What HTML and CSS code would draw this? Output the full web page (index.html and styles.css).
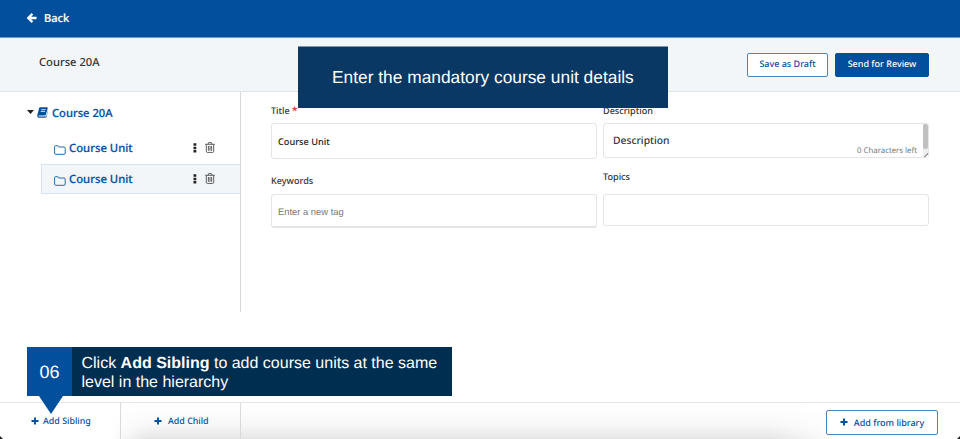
FILE: index.html
```html
<!DOCTYPE html>
<html lang="en">
<head>
<meta charset="utf-8">
<title>Course 20A</title>
<link rel="stylesheet" href="styles.css">
</head>
<body>
<svg class="defs" aria-hidden="true">
  <symbol id="folder" viewBox="0 0 12 10"><path d="M.6 8.2V1.7Q.6.7 1.6.7H3.7Q4.6.7 4.6 1.6V2H10Q11.2 2 11.2 3.1V8.2Q11.2 9.3 10 9.3H1.7Q.6 9.3.6 8.2Z" fill="none" stroke="#2c67ad" stroke-width="1"/></symbol>
  <symbol id="trash" viewBox="0 0 10 11"><path d="M.2 2.3H9.8M3 2.2L3.6.6H6.4L7 2.2M1.3 2.4V9.2Q1.3 10.4 2.3 10.4H7.7Q8.7 10.4 8.7 9.2V2.4M3.4 4V8.8M5 4V8.8M6.6 4V8.8" fill="none" stroke="#555" stroke-width=".95"/></symbol>
  <symbol id="dots" viewBox="0 0 4 10"><path d="M.5.3h2.8v2.5H.5zM.5 3.7h2.8v2.5H.5zM.5 7.1h2.8v2.5H.5z" fill="#222"/></symbol>
  <symbol id="plus" viewBox="0 0 8 8"><path d="M4 .5V7.5M.5 4H7.5" stroke="#024f9d" stroke-width="1.9"/></symbol>
</svg>
<div class="app">
  <header class="topbar">
    <svg class="back-icon" viewBox="0 0 10 10"><path d="M5.4.9L1.3 5l4.1 4.1M1.5 5H9.5" fill="none" stroke="#fff" stroke-width="2.3"/></svg>
    <span class="back">Back</span>
  </header>
  <div class="titlebar">
    <span class="course-name">Course 20A</span>
    <div class="actions">
      <button class="btn draft">Save as Draft</button>
      <button class="btn review">Send for Review</button>
    </div>
  </div>
  <main class="body">
    <nav class="tree">
      <div class="root">
        <svg class="caret" viewBox="0 0 7 4"><path d="M0 0h7L3.5 4z" fill="#222"/></svg>
        <svg class="book" viewBox="0 0 11 11"><path d="M3.2.3H10Q11 .3 10.7 1.3L8.9 7.6Q8.6 8.5 7.7 8.5H2Q1.2 8.5 1.4 9.1 1.5 9.5 2.2 9.5H8.3Q9.1 9.5 9.4 8.6L10.9 3V4L9.5 9.7Q9.2 10.7 8.2 10.7H1.6Q.1 10.6.2 8.6L2.1 1.2Q2.3.3 3.2.3Z" fill="#024f9d"/><path d="M4.2 2.7H8.6M3.7 4.4H8.1" stroke="#fff" stroke-width=".8"/></svg>
        <span class="root-name">Course 20A</span>
      </div>
      <div class="unit"><svg class="folder"><use href="#folder"/></svg><span class="unit-name">Course Unit</span><svg class="dots"><use href="#dots"/></svg><svg class="trash"><use href="#trash"/></svg></div>
      <div class="unit selected"><svg class="folder"><use href="#folder"/></svg><span class="unit-name">Course Unit</span><svg class="dots"><use href="#dots"/></svg><svg class="trash"><use href="#trash"/></svg></div>
    </nav>
    <section class="form">
      <div class="column">
        <div class="label">Title <span class="required">*</span></div>
        <div class="field title-field">Course Unit</div>
        <div class="label keywords-label">Keywords</div>
        <div class="field tag-field">Enter a new tag</div>
      </div>
      <div class="column">
        <div class="label">Description</div>
        <div class="field desc-field"><span>Description</span><span class="count">0 Characters left</span><span class="scroll"><i class="thumb"></i><i class="grip"></i></span></div>
        <div class="label topics-label">Topics</div>
        <div class="field topics-field"></div>
      </div>
    </section>
  </main>
  <footer class="footer">
    <div class="add sibling"><svg class="plus"><use href="#plus"/></svg><span>Add Sibling</span></div>
    <div class="add child"><svg class="plus"><use href="#plus"/></svg><span>Add Child</span></div>
    <div class="rest"><button class="btn library"><svg class="plus"><use href="#plus"/></svg><span>Add from library</span></button></div>
    <i class="glow"></i><i class="corner left"></i><i class="corner right"></i>
  </footer>
  <div class="banner"><span>Enter the mandatory course unit details</span></div>
  <aside class="callout">
    <div class="step"><span>06</span></div>
    <p class="hint"><span class="line first">Click <b>Add Sibling</b> to add course units at the same</span><span class="line second">level in the hierarchy</span></p>
  </aside>
</div>
</body>
</html>
```

FILE: styles.css
```css
* { box-sizing: border-box; }
body { margin: 0; background: #fff; font-family: "Noto Sans", "Open Sans", sans-serif; font-weight: 500; font-size: 11px; color: #333; text-rendering: geometricPrecision; }
svg { display: block; flex: none; overflow: visible; }
.defs { position: absolute; width: 0; height: 0; }
.app { position: relative; width: 960px; height: 439px; overflow: hidden; display: flex; flex-direction: column; }
.topbar { height: 38px; flex: none; background: #024f9d; border-bottom: 1px solid #6b99c9; display: flex; align-items: center; padding: 0 0 2px 27px; gap: 7px; color: #fff; }
.back-icon { width: 10px; height: 10px; }
.back { margin-top: 2px; font-size: 11.1px; -webkit-text-stroke: .2px; }
.titlebar { height: 54px; flex: none; background: #f3f6f9; border-bottom: 1px solid #dfe4e6; display: flex; align-items: center; justify-content: space-between; padding: 0 31px 0 39px; }
.course-name { font-size: 11.2px; margin-top: -4px; }
.actions { display: flex; gap: 7px; }
.btn { display: flex; align-items: center; justify-content: center; padding: 0; height: 24px; border: 1px solid #4d86bf; border-radius: 2px; background: #fff; color: #024f9d; font: 500 9px "Noto Sans", sans-serif; text-rendering: inherit; }
.draft { width: 81px; padding-bottom: 2px; }
.review { width: 94px; padding-bottom: 2px; background: #024f9d; border-color: #024f9d; color: #fff; }
.body { flex: 1; display: flex; align-items: flex-start; }
.tree { width: 241px; height: 220px; border-right: 1px solid #d7d9da; padding-top: 9px; color: #024f9d; }
.root { height: 22px; display: flex; align-items: center; padding-left: 27px; font-size: 11.2px; -webkit-text-stroke: .2px; }
.root-name { margin-top: 2px; }
.caret { width: 7px; height: 4px; margin-right: 3px; }
.book { width: 11px; height: 11px; margin-right: 4px; }
.unit { height: 30px; margin-left: 41px; border: 1px solid transparent; border-right: 0; display: flex; align-items: center; padding-left: 12px; font-size: 11.3px; -webkit-text-stroke: .2px; }
.root + .unit { margin-top: 10px; }
.root + .unit + .unit { margin-top: 1px; }
.selected { background: #f3f6f9; border-color: #d5e3f2; }
.folder { width: 12px; height: 10px; margin: 3px 3px 0 0; }
.unit-name { width: 124px; margin-top: 1px; }
.dots { width: 4px; height: 10px; margin-right: 8px; }
.trash { width: 10px; height: 11px; margin-top: -1px; }
.form { display: flex; gap: 6px; padding: 12px 0 0 30px; }
.column { width: 326px; }
.label { height: 14px; line-height: 14px; font-size: 9.1px; }
.required { color: #e53945; font-size: 10px; font-weight: 700; line-height: 1; }
.field { border: 1px solid #e3e4e5; border-radius: 3px; padding: 0 6px; display: flex; align-items: center; }
.title-field { height: 36px; margin-top: 5px; color: #222; font-size: 9.2px; }
.keywords-label { margin-top: 15px; }
.tag-field { height: 34px; margin-top: 6px; padding-top: 2px; border-bottom-width: 2px; color: #777; font: 9.4px "Liberation Sans", sans-serif; }
.desc-field { position: relative; height: 35px; margin-top: 5px; padding: 0 9px; font-size: 10.3px; }
.count { position: absolute; right: 11px; bottom: 0; font-size: 7.8px; font-weight: 400; line-height: 11px; color: #777; }
.scroll { position: absolute; right: 0; top: 0; width: 5px; height: 33px; background: #eee; }
.thumb { display: block; height: 25px; border-radius: 2px; background: #c1c1c1; }
.grip { display: block; width: 5px; height: 7px; margin-top: 1px; background: linear-gradient(135deg, #eee 66%, #999 66%, #999 76%, #fff 76%); }
.topics-label { margin-top: 12px; }
.topics-field { height: 32px; margin-top: 10px; }
.footer { position: relative; height: 37px; flex: none; border-top: 1px solid #e3e4e5; display: flex; }
.add { display: flex; align-items: center; padding-bottom: 1px; border-right: 1px solid #d7d9da; color: #024f9d; font-size: 8.9px; }
.add, .library { z-index: 1; }
.plus { width: 8px; height: 8px; }
.sibling { width: 121px; padding-left: 31px; gap: 4px; }
.child { width: 120px; padding-left: 33px; gap: 6px; }
.rest { flex: 1; display: flex; align-items: flex-start; justify-content: flex-end; padding: 7px 22px 0 0; }
.library { position: relative; width: 112px; height: 25px; gap: 6px; padding-bottom: 1px; }
.glow { position: absolute; left: 110px; right: 122px; bottom: 0; height: 33px; background: linear-gradient(transparent, #00000008 60%, #00000018); -webkit-mask-image: linear-gradient(90deg, transparent, #000 40px, #000 660px, transparent); border-bottom: 1px solid #0000001c; }
.corner { position: absolute; bottom: 0; width: 3px; height: 3px; background: #222; }
.left { left: 0; clip-path: polygon(0 0, 100% 100%, 0 100%); }
.right { right: 0; clip-path: polygon(100% 0, 100% 100%, 0 100%); }
.banner { position: absolute; left: 298px; top: 46px; width: 370px; height: 62px; background: #083863; border-top: 1px solid #7e97ad; color: #fff; display: flex; align-items: center; font: 17.35px "Liberation Sans", sans-serif; padding-left: 34px; white-space: nowrap; }
.callout { position: absolute; left: 27px; top: 347px; width: 425px; height: 49px; display: flex; color: #fff; font-family: "Liberation Sans", sans-serif; font-weight: 400; }
.step { position: relative; width: 45px; padding-top: 2px; background: #024f9d; display: flex; align-items: center; justify-content: center; font-size: 18px; }
.step::after { content: ""; position: absolute; left: 12px; top: 49px; width: 24px; height: 18px; background: #024f9d; clip-path: polygon(0 0, 100% 0, 50% 100%); }
.hint { flex: 1; margin: 0; padding: 7px 0 0 9.5px; background: #002e50; font-size: 16px; line-height: 19px; }
.line { display: block; white-space: nowrap; }
```
